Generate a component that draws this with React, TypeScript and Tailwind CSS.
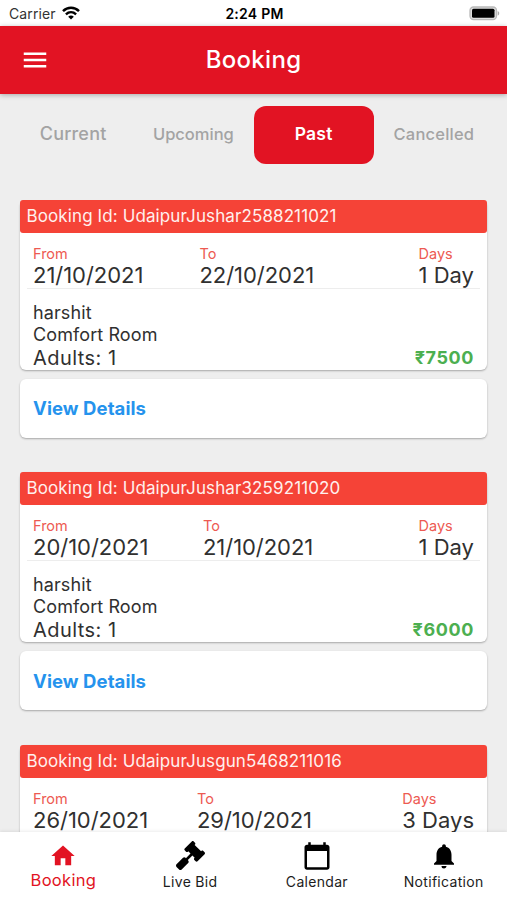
import React from "react";
import { MdMenu, MdHome, MdCalendarToday, MdNotifications } from "react-icons/md";
import { FaGavel } from "react-icons/fa";

type Booking = {
  id: string;
  from: string;
  to: string;
  days: string;
  price: string;
  toOffset: string;
};

const bookings: Booking[] = [
  { id: "UdaipurJushar2588211021", from: "21/10/2021", to: "22/10/2021", days: "1 Day", price: "7500", toOffset: "w-[166.500px]" },
  { id: "UdaipurJushar3259211020", from: "20/10/2021", to: "21/10/2021", days: "1 Day", price: "6000", toOffset: "w-[170px]" },
  { id: "UdaipurJusgun5468211016", from: "26/10/2021", to: "29/10/2021", days: "3 Days", price: "18000", toOffset: "w-[164px]" },
];

function StatusBar() {
  return (
    <div className="grid h-[25.500px] shrink-0 grid-cols-[1fr_auto_1fr] items-center bg-white pt-[2px] pr-[7px] pl-[9px] text-black">
      <div className="flex items-center gap-[6px]">
        <span className="text-[14px] leading-none tracking-[0.1px] text-[#333]">Carrier</span>
        <svg width="18" height="14" viewBox="0 0 18 14" fill="none" stroke="black" className="-mt-[2px]">
          <path d="M1 5.100C5.600 .6 12.400 .6 17 5.100" strokeWidth="2.500" />
          <path d="M3.900 8.300c3-2.800 7.200-2.800 10.200 0" strokeWidth="2.400" />
          <path d="M9 13.500 6.200 10.700c1.600-1.500 4-1.500 5.600 0z" fill="black" stroke="none" />
        </svg>
      </div>
      <span className="text-center text-[14px] leading-none font-semibold tracking-[0.250px]">2:24 PM</span>
      <svg width="31" height="15" viewBox="0 0 31 15" className="justify-self-end">
        <rect x="1" y="1" width="26.500" height="12.600" rx="3.500" fill="#ddd" stroke="#b9b9b9" strokeWidth="1.300" />
        <rect x="3" y="2.800" width="22.500" height="9" rx="1.500" fill="black" />
        <path d="M28.700 5c2 .8 2 3.800 0 4.600z" fill="#aaa" />
      </svg>
    </div>
  );
}

function AppBar() {
  return (
    <header className="z-10 grid h-[68px] shrink-0 grid-cols-[1fr_auto_1fr] items-center bg-[#e21323] px-[20px] text-white shadow-[0_1px_5px_rgba(0,0,0,0.3)]">
      <MdMenu size={30} />
      <h1 className="text-[24px] leading-none font-medium tracking-[0.3px]">Booking</h1>
    </header>
  );
}

function Tabs() {
  return (
    <nav className="mx-[13px] mt-[12.500px] grid h-[58px] shrink-0 grid-cols-4 items-center text-center leading-none font-medium text-[#a3a3a3]">
      <span className="pb-[2px] text-[18px] tracking-[0.200px]">Current</span>
      <span className="pb-[2px] text-[16.500px]">Upcoming</span>
      <span className="flex h-[58px] items-center justify-center rounded-[12px] bg-[#e21323] pb-[2px] text-[17.500px] font-semibold tracking-[0.200px] text-white">
        Past
      </span>
      <span className="pb-[2px] text-[16.500px] tracking-[0.200px]">Cancelled</span>
    </nav>
  );
}

function BookingCard({ booking }: { booking: Booking }) {
  return (
    <article className="h-[272.400px] shrink-0">
      <div className="h-[170px] rounded-[6px] bg-white shadow-[0_1px_2px_rgba(0,0,0,0.3)]">
        <div className="flex h-[33px] items-center rounded-[3px] bg-[#f54337] pl-[6.500px] text-[17px] leading-none tracking-[0.110px] text-[#fff0ee]">
          Booking Id: {booking.id}
        </div>
        <div className="mx-[7px] flex h-[56px] border-b border-[#ededed] px-[6px] pt-[13px] text-[22px] leading-[26px] text-[#303030]">
          <div className={booking.toOffset}>
            <div className="text-[14.500px] leading-[16px] text-[#ed5a52]">From</div>
            <div className="tracking-[-0.030px]">{booking.from}</div>
          </div>
          <div>
            <div className="text-[14.500px] leading-[16px] text-[#ed5a52]">To</div>
            <div className="tracking-[-0.050px]">{booking.to}</div>
          </div>
          <div className="ml-auto">
            <div className="text-[14.500px] leading-[16px] text-[#ed5a52]">Days</div>
            <div>{booking.days}</div>
          </div>
        </div>
        <div className="flex items-end justify-between px-[13px] pt-[12.600px] text-[#303030]">
          <div>
            <div className="text-[18px] leading-[22px] tracking-[0.100px]">harshit</div>
            <div className="text-[18px] leading-[22px] tracking-[0.100px]">Comfort Room</div>
            <div className="text-[20px] leading-[25px] tracking-[0.450px]">Adults: 1</div>
          </div>
          <div className="mb-px text-[18px] leading-[25px] font-bold tracking-[0.600px] text-[#4caf50]">₹{booking.price}</div>
        </div>
      </div>
      <div className="mt-[9px] flex h-[59px] items-center rounded-[6px] bg-white pl-[13px] text-[18.500px] leading-none font-bold tracking-[0.080px] text-[#2593ed] shadow-[0_1px_2px_rgba(0,0,0,0.3)]">
        View Details
      </div>
    </article>
  );
}

function BottomNav() {
  return (
    <nav className="z-10 grid h-[68px] shrink-0 grid-cols-4 bg-white text-center text-[14px] tracking-[0.300px] text-[#1c1c1c] shadow-[0_-1px_3px_rgba(0,0,0,0.08)]">
      <div className="flex flex-col items-center pt-[10px] text-[#e21323]">
        <MdHome size={28} />
        <span className="text-[16.500px] leading-[20px]">Booking</span>
      </div>
      <div className="flex flex-col items-center pt-[9px]">
        <FaGavel size={29} color="black" />
        <span className="mt-[2px] leading-[20px]">Live Bid</span>
      </div>
      <div className="flex flex-col items-center pt-[9px]">
        <MdCalendarToday size={30} color="black" />
        <span className="mt-px leading-[20px]">Calendar</span>
      </div>
      <div className="flex flex-col items-center pt-[9px]">
        <MdNotifications size={30} color="black" />
        <span className="mt-px leading-[20px]">Notification</span>
      </div>
    </nav>
  );
}

export default function App() {
  return (
    <div className="flex h-[900px] w-[507px] flex-col overflow-hidden bg-[#eee] font-['Inter','Liberation_Sans',sans-serif]">
      <StatusBar />
      <AppBar />
      <Tabs />
      <main className="mt-[36px] flex min-h-0 flex-1 flex-col overflow-hidden px-[20px]">
        {bookings.map((booking) => (
          <BookingCard key={booking.id} booking={booking} />
        ))}
      </main>
      <BottomNav />
    </div>
  );
}
